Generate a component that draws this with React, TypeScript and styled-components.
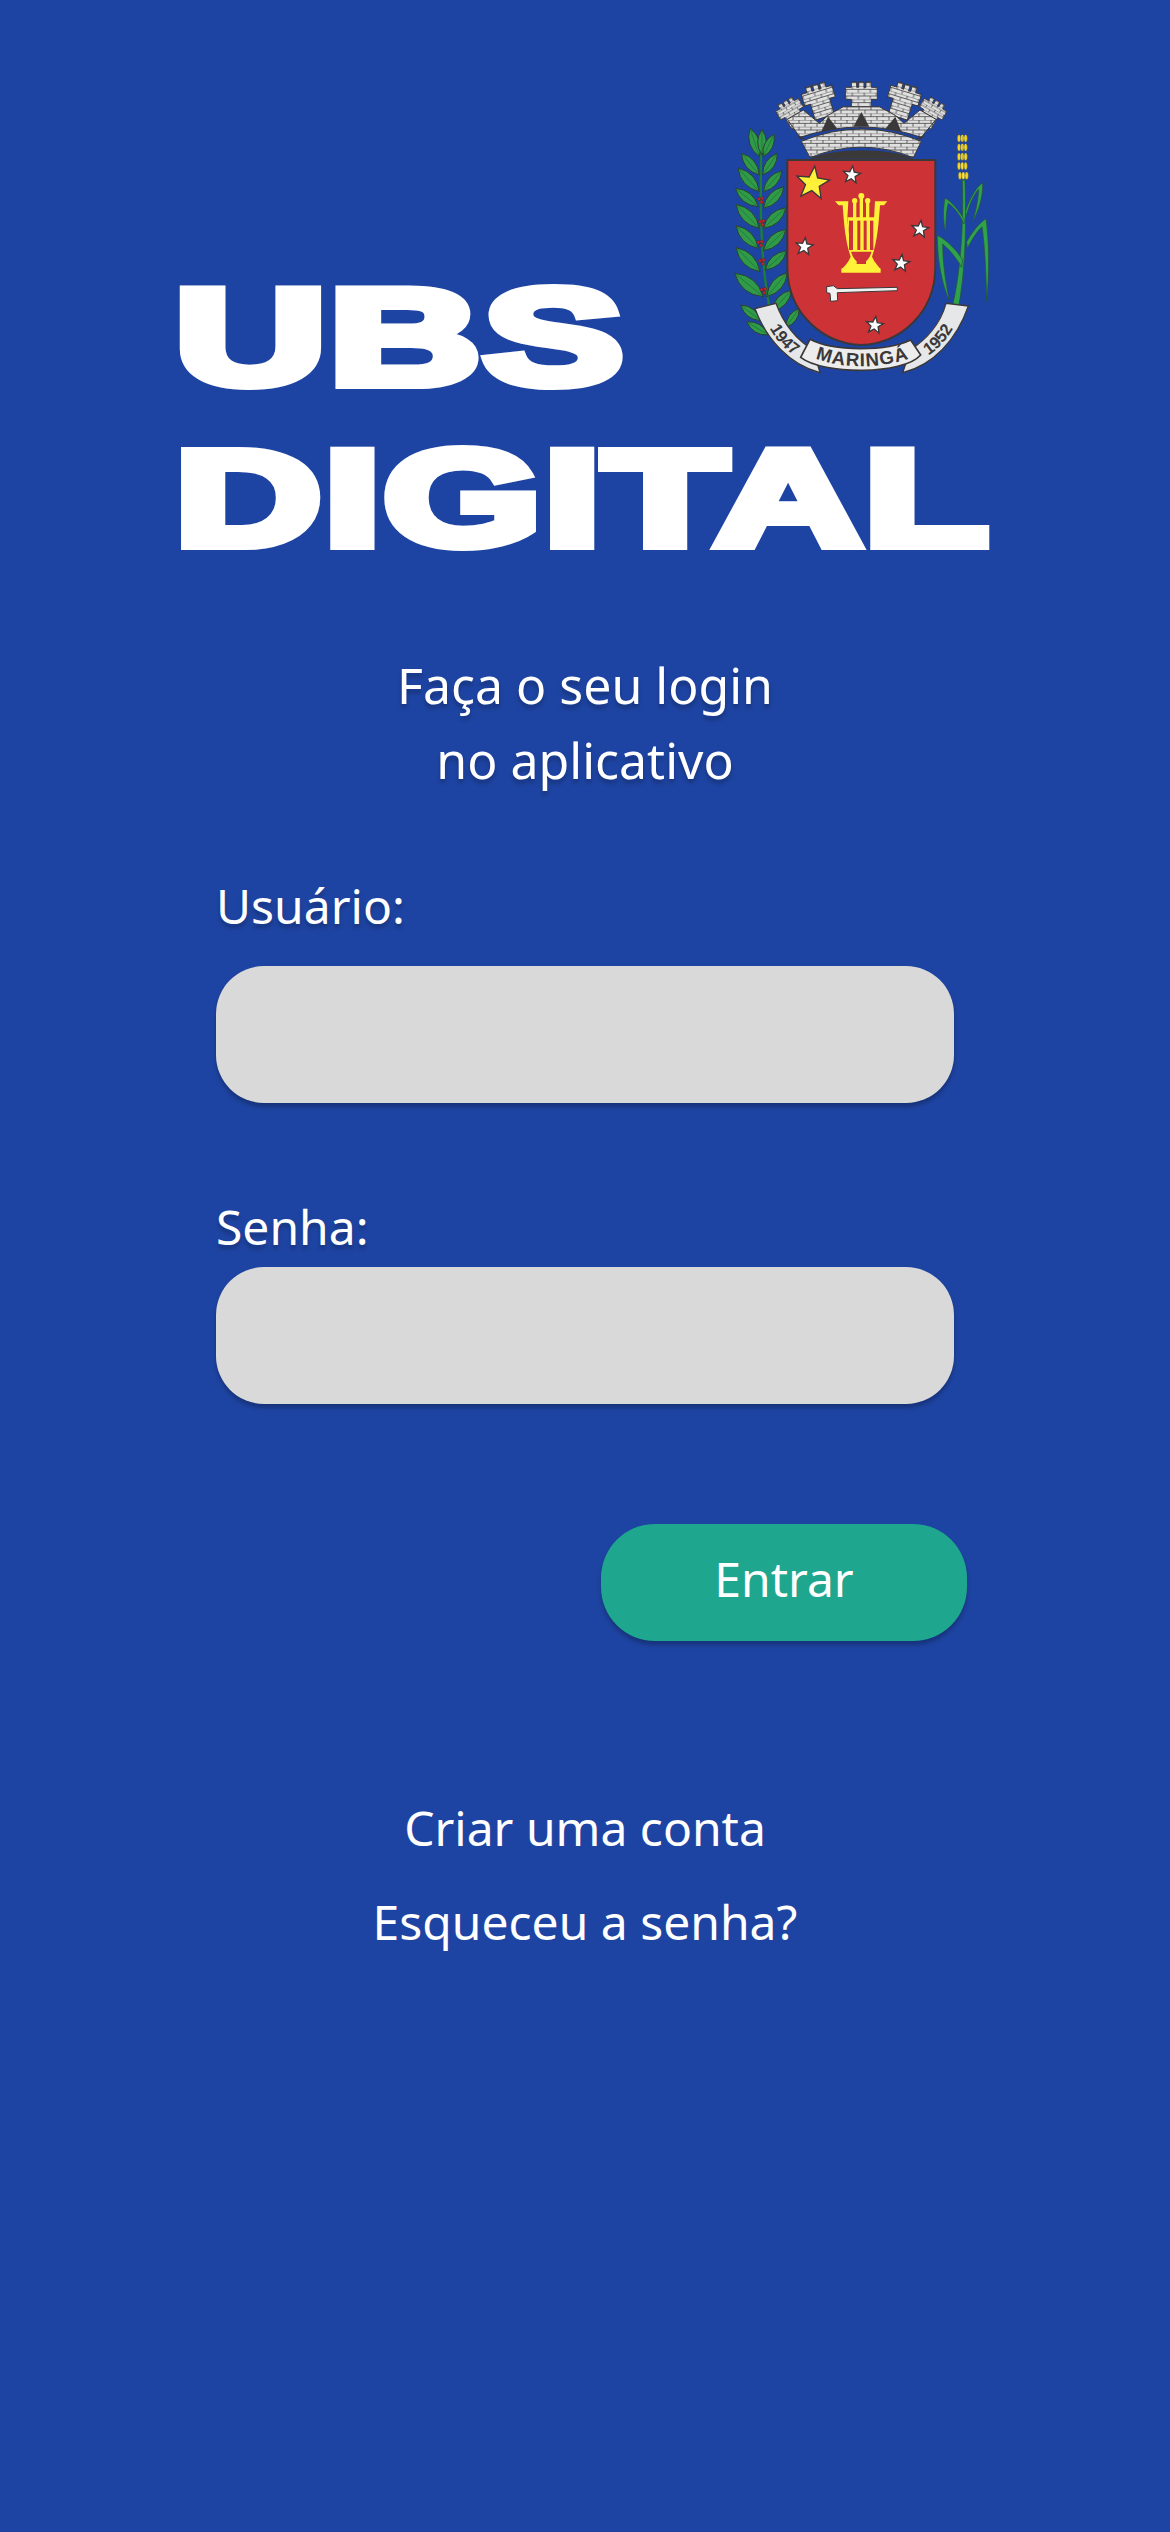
import React from 'react';
import styled, { createGlobalStyle } from 'styled-components';

const Global = createGlobalStyle`
  html, body { margin: 0; padding: 0; background: #1e44a3; }
`;

const Page = styled.main`
  width: 1170px;
  height: 2532px;
  background: #1e44a3;
  color: #fff;
  font-family: "Noto Sans", sans-serif;
  overflow: hidden;
  display: flex;
  flex-direction: column;
`;

const Brand = styled.header`
  padding: 60px 0 0 172px;
  display: flex;
  flex-direction: column;
`;

const BrandTop = styled.div`
  display: flex;
  align-items: flex-end;
  justify-content: space-between;
  width: 848px;
`;

const BrandWord = styled.div<{ $stretch: number; $gap?: number; $spacing: number }>`
  height: 104px;
  margin-top: ${p => p.$gap ?? 0}px;
  margin-left: 3px;
  font-family: "Liberation Sans", Arial, sans-serif;
  font-weight: 700;
  font-size: 135px;
  letter-spacing: ${p => p.$spacing}px;
  line-height: 104px;
  white-space: nowrap;
  paint-order: stroke fill;
  -webkit-text-stroke: 10px #fff;
  transform: scaleX(${p => p.$stretch});
  transform-origin: left center;
`;

const Intro = styled.h1`
  margin: 97px 0 0;
  font-size: 50px;
  line-height: 75px;
  font-weight: 400;
  text-align: center;
  text-shadow: 0 4px 4px rgba(0, 0, 0, 0.25);
`;

const Form = styled.form`
  margin: 75px 216px 0;
  display: flex;
  flex-direction: column;
`;

const Label = styled.label<{ $gap: number; $after: number }>`
  display: block;
  margin-top: ${p => p.$gap}px;
  margin-bottom: ${p => p.$after}px;
  font-size: 48px;
  line-height: 65px;
  text-shadow: 0 4px 4px rgba(0, 0, 0, 0.25);
`;

const Field = styled.input`
  display: block;
  box-sizing: border-box;
  width: 738px;
  height: 137px;
  border: 0;
  border-radius: 48px;
  background: #d9d9d9;
  box-shadow: 0 4px 4px rgba(0, 0, 0, 0.25);
`;

const Submit = styled.button`
  align-self: flex-end;
  width: 366px;
  height: 117px;
  margin: 120px -13px 0 0;
  padding: 0 0 8px;
  border: 0;
  border-radius: 54px;
  background: #1fa68e;
  color: #fff;
  font-family: inherit;
  font-size: 48px;
  box-shadow: 0 4px 4px rgba(0, 0, 0, 0.25);
`;

const Links = styled.nav`
  margin-top: 154px;
  display: flex;
  flex-direction: column;
  align-items: center;
  gap: 29px;
`;

const LinkItem = styled.a`
  font-size: 48px;
  line-height: 65px;
  color: #fff;
  text-decoration: none;
`;

const CrestSvg = styled.svg`
  display: block;
  width: 320px;
  height: 330px;
  flex: none;
`;

const DARK = '#3a3839';
const star = (cx: number, cy: number, r: number) => {
  const pts: string[] = [];
  for (let i = 0; i < 10; i++) {
    const rad = i % 2 === 0 ? r : r * 0.42;
    const a = -Math.PI / 2 + (i * Math.PI) / 5 + 0.12;
    pts.push(`${(cx + rad * Math.cos(a)).toFixed(1)},${(cy + rad * Math.sin(a)).toFixed(1)}`);
  }
  return pts.join(' ');
};

const leafPath = (x1: number, y1: number, x2: number, y2: number, b = 0.34) => {
  const mx = (x1 + x2) / 2, my = (y1 + y2) / 2;
  const dx = x2 - x1, dy = y2 - y1;
  const c1 = `${mx - dy * b},${my + dx * b}`;
  const c2 = `${mx + dy * b},${my - dx * b}`;
  return `M${x1} ${y1} Q${c1} ${x2} ${y2} Q${c2} ${x1} ${y1} Z`;
};

const LEAVES: number[][] = [
  [178, 290, 150, 205], [186, 285, 186, 208], [190, 290, 222, 222],
  [178, 345, 124, 280], [188, 345, 232, 280],
  [178, 395, 114, 324], [190, 395, 246, 332],
  [175, 440, 106, 385], [190, 445, 252, 380],
  [178, 505, 108, 433], [190, 505, 258, 443],
  [175, 565, 108, 497], [190, 572, 258, 508],
  [180, 635, 108, 563], [195, 630, 260, 572],
  [190, 710, 104, 640], [200, 710, 262, 638],
  [215, 755, 275, 690], [182, 782, 122, 735], [258, 802, 298, 745], [205, 825, 140, 785],
];
const BERRIES = [[182, 420], [185, 488], [180, 550], [185, 605], [190, 692]];
const GRAINS = [[787, 235], [787, 262], [787, 290], [787, 318], [790, 347]];

const Tower = ({ x, y, a, s = 1 }: { x: number; y: number; a: number; s?: number }) => (
  <g transform={`translate(${x} ${y}) rotate(${a}) scale(${s})`} fill="url(#brick)" stroke={DARK} strokeWidth="3">
    <path d="M-48 0 V-36 H-30 V-52 H-14 V-36 H-8 V-52 H8 V-36 H14 V-52 H30 V-36 H48 V0 H30 V50 H-30 V0 Z" />
  </g>
);

const Crest = () => (
  <CrestSvg viewBox="0 0 960 990" role="img" aria-label="Brasão de Maringá">
    <defs>
      <pattern id="brick" width="36" height="20" patternUnits="userSpaceOnUse">
        <rect width="36" height="20" fill="#e0e0e0" />
        <path d="M0 0H36M0 10H36M9 0V10M27 10V20" stroke="#444" strokeWidth="2.4" fill="none" />
      </pattern>
      <path id="arc47" d="M190 765 Q234 875 322 905" />
      <path id="arc52" d="M646 905 Q734 875 778 765" />
      <path id="arcM" d="M325 888 Q480 950 650 888" />
    </defs>

    <path d="M185 215 C180 400 178 600 212 760" fill="none" stroke="#1f7d3a" strokeWidth="7" />
    {LEAVES.map((l, i) => (
      <g key={i}>
        <path d={leafPath(l[0], l[1], l[2], l[3])} fill="#2f9a48" stroke="#2c3f33" strokeWidth="3" />
        <path d={`M${l[0]} ${l[1]} L${l[2]} ${l[3]}`} stroke="#1c5a2c" strokeWidth="1.5" />
      </g>
    ))}
    {BERRIES.map(([x, y], i) => (
      <g key={i} fill="#c2242c" stroke="#3a1a1a" strokeWidth="1">
        <circle cx={x - 5} cy={y - 3} r="5" />
        <circle cx={x + 5} cy={y - 5} r="5" />
        <circle cx={x + 3} cy={y + 6} r="5" />
      </g>
    ))}

    <g stroke="#3f4f43" strokeWidth="1">
      {GRAINS.flatMap(([x, y], i) => [
        <path key={`a${i}`} d={`M${x} ${y} L${x - 34} ${y - 30} M${x} ${y} L${x + 32} ${y - 32} M${x} ${y} V${y - 34}`} fill="none" />,
        <ellipse key={`l${i}`} cx={x - 10} cy={y} rx="5" ry="11" fill="#f4d42a" />,
        <ellipse key={`m${i}`} cx={x} cy={y} rx="5" ry="11" fill="#ffe23a" />,
        <ellipse key={`r${i}`} cx={x + 10} cy={y} rx="5" ry="11" fill="#f4d42a" />,
      ])}
    </g>
    <g fill="#2fa24c" stroke="#26503a" strokeWidth="2">
      <path d="M787 360 H795 C798 480 800 620 772 762 L752 758 C780 660 792 500 787 360 Z" />
      <path d="M794 480 C775 450 755 425 735 414 C728 450 730 490 737 516 C738 470 740 445 745 430 C765 445 780 465 792 492 Z" />
      <path d="M796 455 C808 420 825 385 848 368 C850 410 835 455 818 484 C830 445 835 415 836 388 C820 405 808 435 798 470 Z" />
      <path d="M788 600 C770 570 740 540 712 526 C712 600 725 670 748 722 C735 660 728 600 728 552 C750 570 770 595 785 622 Z" />
      <path d="M800 545 C815 520 835 490 858 476 C868 550 868 640 860 725 C858 640 855 560 846 500 C830 515 815 540 802 565 Z" />
    </g>

    <Tower x={360} y={124} a={-17} />
    <Tower x={608} y={124} a={17} />
    <Tower x={484} y={118} a={0} />
    <Tower x={276} y={160} a={-30} s={0.82} />
    <Tower x={692} y={160} a={30} s={0.82} />
    <path d="M300 232 L262 178 L310 150 L358 190 L384 166 L430 140 H538 L586 166 L612 190 L660 150 L708 178 L664 232 Q484 170 300 232 Z" fill="url(#brick)" stroke={DARK} strokeWidth="3" />
    <g fill={DARK}>
      <path d="M364 216 L384 170 L412 206 Z" />
      <path d="M460 200 L484 156 L508 200 Z" />
      <path d="M556 206 L586 170 L604 216 Z" />
    </g>
    <path d="M330 296 C400 262 570 262 640 296 Z" fill={DARK} />
    <path d="M292 226 L316 236 L300 238 Z M676 226 L646 236 L664 238 Z" fill={DARK} />
    <path d="M304 244 Q484 170 664 244 L640 293 Q484 230 330 293 Z" fill="url(#brick)" stroke={DARK} strokeWidth="3" />

    <path d="M262 300 H706 V620 C706 760 600 850 484 855 C368 850 262 760 262 620 Z" fill="#cd3237" stroke={DARK} strokeWidth="6" />
    <polygon points={star(338, 370, 52)} fill="#fff03a" stroke={DARK} strokeWidth="4" />
    {[[455, 345], [660, 508], [313, 560], [603, 610], [524, 796]].map(([x, y], i) => (
      <polygon key={i} points={star(x, y, 27)} fill="#fff" stroke={DARK} strokeWidth="4" />
    ))}
    <path d="M405 424 H445 L442 476 L452 570 C456 590 465 600 470 604 V612 H498 V604 C503 600 512 590 516 570 L522 476 L525 424 H562 L552 436 H540 C536 490 532 545 516 590 L522 602 C530 612 536 622 542 626 V638 H424 V626 C432 622 440 612 446 602 L452 590 C436 545 432 490 428 436 H416 Z" fill="#fff03a" />
    <path d="M442 472 H526 L520 575 H452 Z" fill="#fff03a" />
    <g fill="#cd3237">
      <rect x="447" y="482" width="12" height="88" />
      <rect x="472" y="482" width="9" height="88" />
      <rect x="491" y="482" width="9" height="88" />
      <rect x="510" y="482" width="10" height="88" />
    </g>
    <g fill="#fff03a">
      <rect x="459" y="420" width="10" height="60" />
      <rect x="479" y="408" width="10" height="70" />
      <rect x="498" y="420" width="10" height="60" />
      <circle cx="464" cy="422" r="8" />
      <circle cx="484" cy="408" r="9" />
      <circle cx="503" cy="422" r="8" />
    </g>
    <path d="M380 680 L400 677 L412 686 L592 682 V692 L412 698 L413 722 L392 724 L390 700 L380 698 Z" fill="#f1f1f1" stroke={DARK} strokeWidth="3" />

    <path d="M165 746 L228 730 C250 790 290 840 340 870 L360 938 C270 915 200 840 165 746 Z" fill="#e6e7e8" stroke={DARK} strokeWidth="4" />
    <path d="M805 738 L738 730 C722 790 680 838 632 868 L608 938 C700 915 770 840 805 738 Z" fill="#e6e7e8" stroke={DARK} strokeWidth="4" />
    <path d="M330 838 C400 875 560 875 632 840 L662 885 C610 945 370 945 302 892 Z" fill="#ededee" stroke={DARK} strokeWidth="5" />
    <g fontFamily="'Liberation Sans', Arial, sans-serif" fill={DARK} fontWeight="700">
      <text fontSize="50"><textPath href="#arc47" startOffset="50%" textAnchor="middle">1947</textPath></text>
      <text fontSize="50"><textPath href="#arc52" startOffset="50%" textAnchor="middle">1952</textPath></text>
      <text fontSize="56" letterSpacing="3"><textPath href="#arcM" startOffset="50%" textAnchor="middle">MARINGÁ</textPath></text>
    </g>
  </CrestSvg>
);

export default function App() {
  return (
    <Page>
      <Global />
      <Brand>
        <BrandTop>
          <BrandWord $stretch={1.55} $spacing={2}>UBS</BrandWord>
          <Crest />
        </BrandTop>
        <BrandWord $stretch={1.5} $spacing={2} $gap={57}>DIGITAL</BrandWord>
      </Brand>
      <Intro>Faça o seu login<br />no aplicativo</Intro>
      <Form>
        <Label htmlFor="usuario" $gap={0} $after={28}>Usuário:</Label>
        <Field id="usuario" type="text" />
        <Label htmlFor="senha" $gap={91} $after={8}>Senha:</Label>
        <Field id="senha" type="password" />
        <Submit type="button">Entrar</Submit>
      </Form>
      <Links>
        <LinkItem href="#">Criar uma conta</LinkItem>
        <LinkItem href="#">Esqueceu a senha?</LinkItem>
      </Links>
    </Page>
  );
}
